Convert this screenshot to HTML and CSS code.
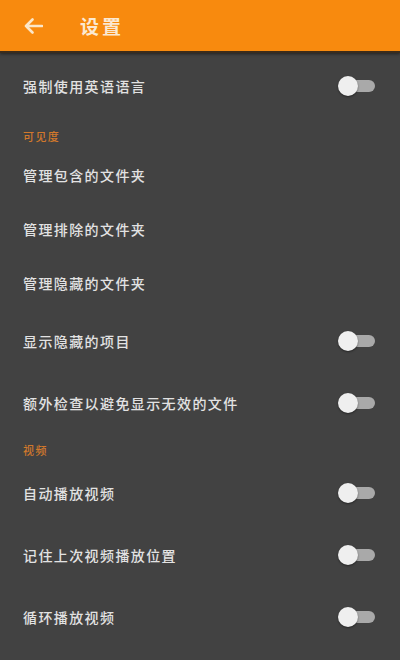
FILE: index.html
```html
<!DOCTYPE html>
<html lang="zh-CN">
<head>
<meta charset="utf-8">
<title>设置</title>
<link rel="stylesheet" href="styles.css">
</head>
<body>
<header class="appbar">
  <svg class="back" width="20" height="18" viewBox="0 0 20 18" aria-hidden="true">
    <path d="M19 9H3M9.5 2.5L3 9l6.5 6.5" fill="none" stroke="#fbe6c8" stroke-width="2.6" stroke-linecap="round" stroke-linejoin="round"/>
  </svg>
  <h1 class="title">设置</h1>
</header>
<main class="list">
  <div class="row row-first toggle-row"><span class="label">强制使用英语语言</span><span class="switch"><span class="track"></span><span class="thumb"></span></span></div>
  <div class="section">可见度</div>
  <div class="row"><span class="label">管理包含的文件夹</span></div>
  <div class="row"><span class="label">管理排除的文件夹</span></div>
  <div class="row"><span class="label">管理隐藏的文件夹</span></div>
  <div class="row toggle-row"><span class="label">显示隐藏的项目</span><span class="switch"><span class="track"></span><span class="thumb"></span></span></div>
  <div class="row toggle-row"><span class="label">额外检查以避免显示无效的文件</span><span class="switch"><span class="track"></span><span class="thumb"></span></span></div>
  <div class="section">视频</div>
  <div class="row toggle-row"><span class="label">自动播放视频</span><span class="switch"><span class="track"></span><span class="thumb"></span></span></div>
  <div class="row toggle-row"><span class="label">记住上次视频播放位置</span><span class="switch"><span class="track"></span><span class="thumb"></span></span></div>
  <div class="row toggle-row"><span class="label">循环播放视频</span><span class="switch"><span class="track"></span><span class="thumb"></span></span></div>
</main>
</body>
</html>
```
FILE: styles.css
```css
html, body {
  margin: 0;
  padding: 0;
  background: #424242;
  height: 100%;
  overflow: hidden;
}
body {
  font-family: "Noto Sans CJK SC", "Noto Sans", sans-serif;
  color: #e4e4e4;
}
.appbar {
  height: 51px;
  background: #f88a0e;
  display: flex;
  align-items: center;
  padding-left: 23px;
  box-shadow: 0 2px 0 #3b2c1c, 0 3px 3px rgba(0,0,0,0.5);
  position: relative;
  z-index: 1;
}
.back {
  display: block;
  flex: none;
}
.title {
  margin: 0 0 0 37px;
  font-size: 19px;
  font-weight: 700;
  letter-spacing: 3px;
  color: #fbe9d2;
  line-height: 1;
}
.list {
  display: flex;
  flex-direction: column;
}
.row {
  height: 54px;
  display: flex;
  align-items: center;
  justify-content: space-between;
  padding: 0 25px 0 23px;
}
.toggle-row {
  height: 62px;
}
.row-first {
  height: 69px;
}
.label {
  font-size: 14px;
  font-weight: 500;
  letter-spacing: 1.4px;
  line-height: 1;
  color: #e2e2e2;
}
.section {
  padding: 9px 23px 5px;
  height: 14px;
  line-height: 14px;
  font-size: 11px;
  font-weight: 500;
  letter-spacing: 1.4px;
  color: #d1782c;
}
.switch {
  position: relative;
  width: 37px;
  height: 20px;
  flex: none;
}
.track {
  position: absolute;
  left: 3px;
  right: 0;
  top: 4px;
  height: 12px;
  border-radius: 6px;
  background: #a9a9a9;
}
.thumb {
  position: absolute;
  left: 0;
  top: 0;
  width: 20px;
  height: 20px;
  border-radius: 50%;
  background: #efefef;
  box-shadow: 0 1px 2px rgba(0,0,0,0.45);
}
```
